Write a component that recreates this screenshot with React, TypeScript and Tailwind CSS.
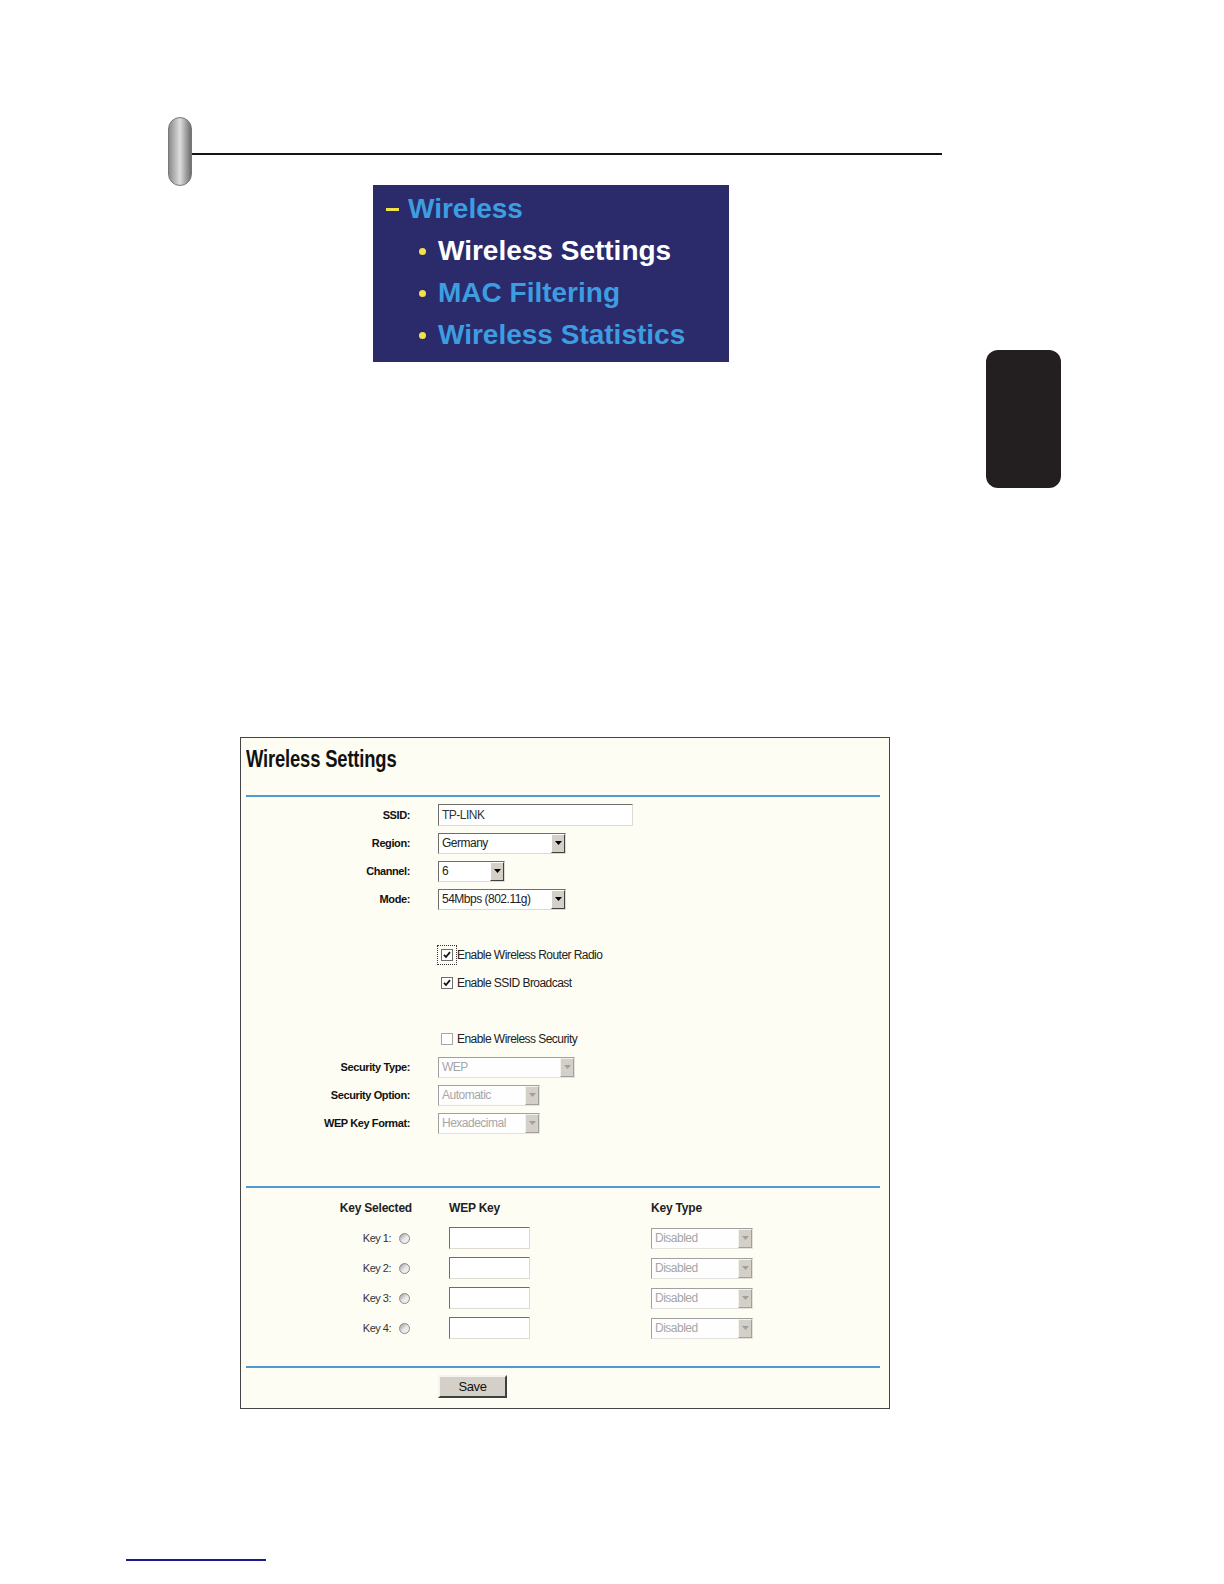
import React from "react";

function Arrow({ disabled }: { disabled?: boolean }) {
  return (
    <div
      className={
        "flex w-[14px] shrink-0 items-center justify-center border bg-[#d4d0c8] " +
        (disabled
          ? "border-t-[#f4f2ee] border-l-[#f4f2ee] border-r-[#a0a0a0] border-b-[#a0a0a0]"
          : "border-t-white border-l-white border-r-[#404040] border-b-[#404040]")
      }
    >
      <svg width="7" height="4" viewBox="0 0 7 4">
        <path d="M0 0 H7 L3.5 4 Z" fill={disabled ? "#a0a0a0" : "#000"} />
      </svg>
    </div>
  );
}

function Select({
  w,
  value,
  disabled,
}: {
  w: string;
  value: string;
  disabled?: boolean;
}) {
  return (
    <div
      className={
        "flex h-[21px] border " +
        w +
        (disabled
          ? " border-t-[#a0a0a0] border-l-[#a0a0a0] border-r-[#e4e2dc] border-b-[#e4e2dc] bg-[#fefefe]"
          : " border-t-[#6e6e6e] border-l-[#6e6e6e] border-r-[#dedbd3] border-b-[#dedbd3] bg-white")
      }
    >
      <div
        className={
          "flex-1 pl-[3px] text-[12px] leading-[19px] tracking-[-0.5px] " +
          (disabled ? "text-[#a6a6a6]" : "text-[#222]")
        }
      >
        {value}
      </div>
      <Arrow disabled={disabled} />
    </div>
  );
}

function Check({ checked, focus }: { checked?: boolean; focus?: boolean }) {
  return (
    <div
      className={
        "flex h-[12px] w-[12px] shrink-0 items-center justify-center border bg-white " +
        (checked ? "border-[#6e6e6e]" : "border-[#a8a8a8]") +
        (focus ? " outline-1 outline-dotted outline-[#333] outline-offset-[3px]" : "")
      }
    >
      {checked && (
        <svg width="8" height="8" viewBox="0 0 8 8">
          <path d="M1 3.8 L3 6 L7 1.2" stroke="#111" strokeWidth="1.8" fill="none" />
        </svg>
      )}
    </div>
  );
}

function Radio() {
  return (
    <div className="h-[11px] w-[11px] shrink-0 rounded-full border border-[#8a8a8a] bg-gradient-to-br from-[#9a9a9a] via-[#e6e6e6] to-[#f6f6f6]" />
  );
}

function Label({ children }: { children: React.ReactNode }) {
  return (
    <div className="w-[169px] shrink-0 text-right text-[11px] font-bold tracking-[-0.4px] text-[#111]">
      {children}
    </div>
  );
}

function Row({ label, children }: { label?: string; children: React.ReactNode }) {
  return (
    <div className="flex h-[28px] items-center gap-[28px]">
      <Label>{label}</Label>
      {children}
    </div>
  );
}

function CheckRow({
  text,
  checked,
  focus,
}: {
  text: string;
  checked?: boolean;
  focus?: boolean;
}) {
  return (
    <div className="flex h-[28px] items-center">
      <div className="w-[200px] shrink-0" />
      <div className="flex items-center gap-[4px]">
        <Check checked={checked} focus={focus} />
        <span className="text-[12px] tracking-[-0.55px] text-[#222]">{text}</span>
      </div>
    </div>
  );
}

function BlueLine() {
  return <div className="ml-[5px] mr-[9px] h-[2px] bg-[#4f9ad2]" />;
}

function KeyRow({ n }: { n: number }) {
  return (
    <div className="flex h-[30px] items-center">
      <div className="flex w-[169px] shrink-0 items-center justify-end gap-[8px]">
        <span className="text-[11px] tracking-[-0.5px] text-[#333]">Key {n}:</span>
        <Radio />
      </div>
      <div className="w-[39px] shrink-0" />
      <div className="w-[202px] shrink-0">
        <div className="h-[22px] w-[81px] border border-t-[#6e6e6e] border-l-[#6e6e6e] border-r-[#dedbd3] border-b-[#dedbd3] bg-white" />
      </div>
      <Select w="w-[102px]" value="Disabled" disabled />
    </div>
  );
}

export default function App() {
  return (
    <div className="w-full bg-white pb-[20px] font-['Liberation_Sans',Arial,sans-serif]">
      {/* header bar */}
      <div className="flex pt-[117px] pl-[168px]">
        <div className="h-[69px] w-[24px] shrink-0 rounded-full border border-[#777] bg-gradient-to-r from-[#8c8c8c] via-[#dedede] to-[#6f6f6f]" />
        <div className="mt-[36px] h-[2px] w-[750px] bg-[#151515]" />
      </div>

      {/* menu + tab */}
      <div className="-mt-[1px] flex">
        <div className="ml-[373px] h-[177px] w-[356px] bg-[#2b2a6b] pt-[3px] pl-[13px] font-bold">
          <div className="flex h-[42px] items-center text-[28px] text-[#3c9ee0]">
            <span className="mr-[9px] h-[3px] w-[13px] bg-[#f2e24a]" />
            Wireless
          </div>
          {[
            { t: "Wireless Settings", c: "text-white" },
            { t: "MAC Filtering", c: "text-[#3c9ee0]" },
            { t: "Wireless Statistics", c: "text-[#3c9ee0]" },
          ].map((it) => (
            <div key={it.t} className={"flex h-[42px] items-center pl-[33px] text-[28px] " + it.c}>
              <span className="mr-[12px] h-[7px] w-[7px] rounded-full bg-[#f2e24a]" />
              {it.t}
            </div>
          ))}
        </div>
        <div className="ml-[257px] mt-[165px] h-[138px] w-[75px] rounded-[12px] bg-[#231f20]" />
      </div>

      {/* settings panel */}
      <div className="ml-[240px] mt-[249px] h-[672px] w-[650px] border border-[#444] bg-[#fdfdf4]">
        <div className="pt-[7px] pl-[5px]">
          <div className="inline-block h-[28px] origin-left scale-x-[0.8] text-[23px] leading-[28px] font-bold tracking-[-0.2px] text-[#111]">
            Wireless Settings
          </div>
        </div>
        <div className="mt-[21px]">
          <BlueLine />
        </div>

        <div className="mt-[4px]">
          <Row label="SSID:">
            <div className="flex h-[22px] w-[195px] items-center border border-t-[#6e6e6e] border-l-[#6e6e6e] border-r-[#dedbd3] border-b-[#dedbd3] bg-white pl-[3px] text-[12px] tracking-[-0.5px] text-[#333]">
              TP-LINK
            </div>
          </Row>
          <Row label="Region:">
            <Select w="w-[128px]" value="Germany" />
          </Row>
          <Row label="Channel:">
            <Select w="w-[67px]" value="6" />
          </Row>
          <Row label="Mode:">
            <Select w="w-[128px]" value="54Mbps (802.11g)" />
          </Row>
        </div>

        <div className="mt-[28px]">
          <CheckRow text="Enable Wireless Router Radio" checked focus />
          <CheckRow text="Enable SSID Broadcast" checked />
        </div>

        <div className="mt-[28px]">
          <CheckRow text="Enable Wireless Security" />
          <Row label="Security Type:">
            <Select w="w-[137px]" value="WEP" disabled />
          </Row>
          <Row label="Security Option:">
            <Select w="w-[102px]" value="Automatic" disabled />
          </Row>
          <Row label="WEP Key Format:">
            <Select w="w-[102px]" value="Hexadecimal" disabled />
          </Row>
        </div>

        <div className="mt-[49px]">
          <BlueLine />
        </div>

        <div className="mt-[8px] flex h-[24px] items-center text-[12px] font-bold tracking-[-0.2px] text-[#222]">
          <div className="w-[171px] shrink-0 text-right">Key Selected</div>
          <div className="w-[37px] shrink-0" />
          <div className="w-[202px] shrink-0">WEP Key</div>
          <div>Key Type</div>
        </div>

        <div className="mt-[3px]">
          {[1, 2, 3, 4].map((n) => (
            <KeyRow key={n} n={n} />
          ))}
        </div>

        <div className="mt-[23px]">
          <BlueLine />
        </div>

        <div className="mt-[7px] pl-[197px]">
          <button className="flex h-[23px] w-[69px] items-center justify-center border-2 border-t-[#f4f4f0] border-l-[#f4f4f0] border-r-[#404040] border-b-[#404040] bg-[#d4d0c8] text-[13px] tracking-[-0.4px] text-[#111]">
            Save
          </button>
        </div>
      </div>

      {/* footer rule */}
      <div className="ml-[126px] mt-[150px] h-[2px] w-[140px] bg-[#1c1c8a]" />
    </div>
  );
}
